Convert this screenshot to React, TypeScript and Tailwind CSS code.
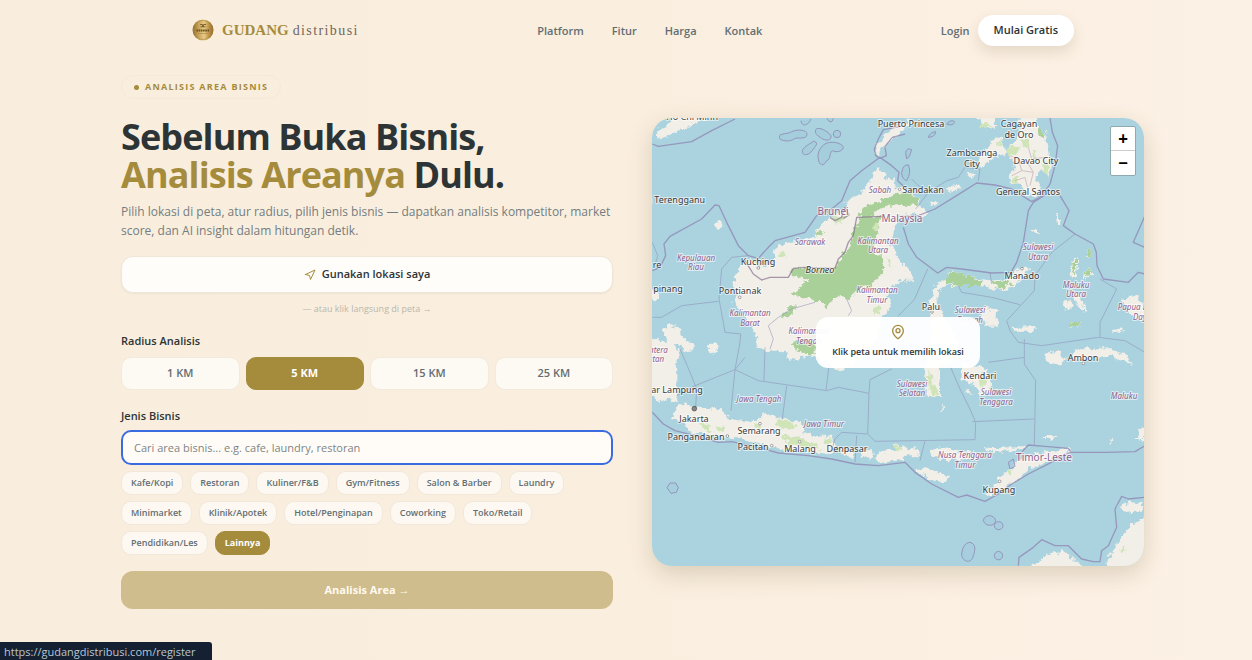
import { useState } from "react";
import { MapPin, Navigation } from "lucide-react";

const navLinks = ["Platform", "Fitur", "Harga", "Kontak"];
const radiusOptions = [1, 5, 15, 25];
const businessTypes = [
  "Kafe/Kopi",
  "Restoran",
  "Kuliner/F&B",
  "Gym/Fitness",
  "Salon & Barber",
  "Laundry",
  "Minimarket",
  "Klinik/Apotek",
  "Hotel/Penginapan",
  "Coworking",
  "Toko/Retail",
  "Pendidikan/Les",
  "Lainnya",
];

const land = [
  // Vietnam
  "36,92 42,62 60,55 72,38 78,15 215,15 190,32 140,40 130,60 100,66 75,78 45,90",
  // Borneo
  "705,178 722,195 722,215 745,205 748,232 775,235 800,255 828,272 822,290 850,310 840,325 790,312 760,335 742,370 745,390 732,410 750,420 762,455 790,480 812,515 765,515 745,530 730,560 742,590 715,620 690,700 650,745 620,775 580,785 540,760 500,742 430,752 418,725 360,725 335,715 335,690 325,650 300,625 280,600 268,580 275,560 263,530 275,490 290,470 300,450 320,450 340,470 375,472 395,450 385,435 395,410 450,400 500,390 510,370 545,335 565,320 600,300 600,285 625,262 650,250 660,225 680,215 690,185",
  // Palawan
  "690,130 705,95 730,70 765,50 790,30 800,35 775,65 740,90 715,115 700,140",
  // Mindanao
  "1085,115 1095,135 1110,180 1088,200 1095,222 1125,225 1150,262 1175,265 1190,235 1170,200 1190,180 1210,205 1217,170 1208,120 1200,70 1180,62 1175,20 1120,20 1125,75 1110,100",
  "1000,155 1020,120 1050,85 1072,88 1072,110 1090,130 1050,145 1010,178",
  "990,20 1050,20 1050,62 1030,60 1010,42",
  "965,195 985,190 993,202 975,208",
  "905,240 930,228 945,238 915,250",
  "850,285 875,272 880,282 855,292",
  // Sulawesi
  "860,620 852,580 865,540 880,520 905,508 908,490 930,488 990,505 1040,515 1090,508 1120,480 1145,468 1152,480 1125,512 1100,538 1050,542 1010,528 950,532 905,530 880,545 875,590 900,625 940,700 920,760 885,770 885,860 846,865 843,790 855,700",
  "950,760 1020,780 1042,820 1032,855 1010,862 995,840 975,818 950,815",
  "1015,598 1055,600 1052,620 1060,650 1020,650 1012,622",
  "1105,655 1150,652 1180,658 1160,668 1108,668",
  "965,842 978,840 976,858 966,855",
  "893,880 897,880 896,915 892,912",
  // Maluku
  "1295,445 1302,465 1294,500 1280,508 1275,482 1282,455",
  "1318,485 1340,476 1342,494 1320,508 1312,520",
  "1290,555 1300,550 1325,605 1318,610 1295,580",
  "1258,580 1282,582 1275,600 1258,598",
  "1325,425 1340,420 1336,442 1322,445",
  "1275,640 1310,645 1300,655 1275,652",
  "1195,735 1240,728 1266,750 1250,768 1215,762",
  "1280,740 1310,718 1390,718 1440,735 1460,765 1440,760 1390,740 1340,745 1290,752",
  "1430,570 1470,560 1500,590 1500,640 1470,630 1450,608",
  "1400,660 1435,655 1430,670 1405,672",
  "1185,990 1215,978 1240,980 1220,995",
  "1480,965 1500,950 1500,995 1475,990",
  "1390,992 1402,990 1400,1002",
  "1163,360 1172,358 1178,375 1168,376",
  "1236,315 1244,312 1246,345 1238,345",
  // Sumatra
  "10,690 60,700 75,685 105,730 93,770 97,880 62,868 42,880 10,850",
  "55,660 75,645 105,658 112,685 140,705 150,722 120,728 98,705 62,690",
  "190,705 210,700 222,722 205,735 188,725",
  "10,540 30,545 45,572 25,580",
  "210,342 225,335 232,350 218,362 208,352",
  // Java
  "100,885 180,895 240,905 252,930 330,940 360,912 400,925 440,935 475,940 475,965 500,980 560,980 566,1015 560,1035 450,1025 380,1015 300,990 200,980 130,965 125,940 80,930 95,900",
  // Nusa Tenggara
  "590,1025 628,1030 620,1046 595,1042",
  "645,1030 680,1020 684,1045 652,1045",
  "692,1040 730,1022 765,1030 772,1050 720,1060 692,1055",
  "745,1005 780,1015 820,1020 818,1040 765,1045",
  "855,1030 890,1015 950,1030 1015,1035 1000,1050 930,1052 870,1048",
  "1020,1015 1060,1018 1145,1008 1150,1018 1080,1028 1022,1030",
  "810,1080 850,1078 912,1105 905,1122 878,1120 815,1092",
  "1018,1160 1070,1100 1100,1075 1140,1040 1200,1030 1275,1018 1270,1035 1200,1060 1150,1080 1120,1110 1060,1148",
  // Australia
  "1150,1380 1180,1355 1210,1335 1250,1322 1300,1360 1320,1385",
  "1380,1380 1400,1330 1430,1280 1470,1240 1510,1225 1510,1390",
  "1418,1190 1470,1178 1500,1182 1490,1205 1440,1212",
];

const forest = [
  "640,325 710,320 692,380 682,430 710,440 715,490 680,530 640,540 612,570 580,560 560,575 545,600 530,575 510,580 500,570 440,560 470,530 490,510 440,500 440,480 480,475 570,480 600,430 625,380",
  "640,320 670,290 720,268 760,255 785,250 826,272 820,286 780,288 725,290 700,305 680,322",
  "905,495 930,488 985,505 1012,515 1005,530 950,532 905,525",
  "1040,520 1090,512 1105,525 1060,540",
  "405,620 430,598 455,590 435,620 410,628",
  "512,370 530,362 535,375 515,382",
  "440,700 480,690 512,700 512,735 480,735 450,720",
  "1318,485 1340,478 1335,495 1320,502",
  "1325,425 1340,420 1336,440 1324,442",
  "1282,460 1296,450 1296,480 1284,495",
  "1275,640 1308,645 1300,653 1277,650",
  "1180,50 1200,75 1195,90 1180,75",
];

const scrub = [
  "170,945 195,950 200,968 175,962",
  "215,955 235,950 240,968 222,970",
  "395,930 440,940 455,955 420,960 390,945",
  "330,945 350,950 345,960 328,956",
  "410,980 460,985 500,1000 530,1020 480,1015 420,1000",
  "745,1010 770,1015 768,1028 750,1026",
  "535,985 560,990 555,1010 538,1005",
  "850,780 860,800 868,830 880,850 862,860 850,830",
  "1000,800 1015,790 1022,820 1010,840",
  "690,340 705,350 700,370 688,360",
  "560,325 600,320 590,345 570,340",
  "400,430 420,425 425,440 405,445",
  "685,600 702,590 705,612 690,618",
  "725,445 735,450 738,475 728,470",
  "1085,115 1125,110 1115,135 1090,138",
  "1130,90 1155,95 1150,115 1130,112",
  "1195,160 1208,165 1205,200 1196,190",
  "1100,200 1120,205 1115,222 1100,220",
  "1160,120 1175,128 1172,150 1160,142",
  "1060,95 1070,98 1068,112 1060,108",
  "1005,45 1025,40 1040,55 1020,58",
  "1085,1085 1100,1080 1098,1098 1086,1100",
  "1420,1325 1440,1310 1445,1322 1425,1335",
];

const seaBorders = [
  "M22 105 L40 112 140 98 200 65 270 30",
  "M22 485 L45 475 62 440 57 405 75 382 170 330 210 288 222 290 250 350 280 410 310 440 340 448 370 415 390 395 480 370 515 320 560 300 590 275 615 215 650 185 705 145 740 170 762 190 758 215 785 240",
  "M780 50 L715 62 700 90 688 120 692 140 705 148 724 140 720 112 742 85 780 75",
  "M775 355 L790 405 815 445 878 492 905 475 950 480 1040 492 1098 490 1115 460 1135 400 1143 350 1150 305 1165 280 1205 255",
  "M1215 27 L1222 70 1238 110 1230 170 1215 225 1190 262 1160 278 1100 240 1050 228 995 222 935 260 870 300 820 320 760 322",
  "M1245 260 L1272 305 1255 350 1290 375 1345 405 1354 430 1356 470 1375 510 1450 520 1480 490 1500 495",
  "M1500 320 L1465 400 1500 415",
  "M22 910 L55 945 90 965 150 980 220 1000 260 998 340 1015 400 1032 490 1040 560 1050 630 1065 700 1070 780 1060 810 1090 860 1125 940 1165 965 1158 1020 1177 1060 1155 1100 1125 1150 1095 1200 1070 1275 1030 1380 1030 1470 1028 1500 1010",
  "M1130 1030 L1150 1008 1200 1012 1270 1018 1280 1030",
  "M1120 1370 L1122 1345 1165 1315 1190 1292 1230 1310 1270 1310 1310 1350 1345 1358 1365 1358 1370 1325 1390 1310 1415 1255 1410 1200 1430 1162 1450 1170 1500 1165",
];

const provinceLines = [
  "M310 440 L260 445 230 480 222 570 235 640 240 670 287 675 285 700 270 782 150 830 95 860",
  "M22 625 L50 625 110 590 220 577",
  "M22 400 L38 440 30 470",
  "M105 720 L135 790 155 840 152 895",
  "M270 782 L340 815 545 845 580 835 672 853 675 812 740 780",
  "M270 782 L258 905",
  "M360 715 L357 815",
  "M425 830 L412 930",
  "M553 760 L543 845",
  "M672 853 L668 975 690 997 990 992 992 940 975 900 945 840 915 770",
  "M560 1025 L570 990 590 970 665 975",
  "M635 980 L630 1060",
  "M840 995 L825 1055",
  "M982 938 L1168 930",
  "M1168 1008 L1172 815 1138 765 1138 715 1138 690",
  "M1030 760 L1138 745",
  "M1290 375 L1220 430 1170 500 1168 545 1085 635 1095 665 1120 700 1190 710 1360 685 1440 695 1500 730",
  "M1365 510 L1415 540 1365 640 1365 685",
  "M848 480 L808 572 760 620",
  "M940 530 L950 550 1040 565 1125 587",
  "M375 720 L385 690 370 650 400 625 440 600 510 580",
  "M605 570 L620 605 610 620",
  "M300 745 L270 782",
  "M1035 490 L1040 525",
  "M812 300 L850 250 905 215 940 205 960 175 1005 180 1000 215",
  "M800 210 L820 230 850 245",
];

const reefs = [
  "M405 90 C395 70 425 78 440 68 C460 60 485 62 486 75 C485 92 465 85 450 88 C440 98 415 98 405 90Z",
  "M512 62 C520 50 550 68 558 80 C560 98 540 95 530 88 C518 80 508 75 512 62Z",
  "M472 130 C470 115 495 105 505 97 C520 98 515 110 505 120 C495 138 475 142 472 130Z",
  "M520 150 C515 130 530 110 540 105 C555 95 590 100 595 115 C592 130 570 130 562 125 C550 135 560 150 545 155 C535 175 522 168 520 150Z",
  "M565 75 a10 10 0 1 0 22 0 a10 10 0 1 0 -22 0Z",
  "M468 35 C470 55 490 50 498 30",
  "M545 28 Q560 50 565 28",
  "M66 1136 L75 1122 92 1122 100 1136 94 1150 78 1153Z",
  "M1015 1235 C1018 1215 1048 1215 1052 1235 C1048 1255 1020 1252 1015 1235Z",
  "M1048 1250 a13 12 0 1 0 26 0 a13 12 0 1 0 -26 0Z",
  "M1048 1340 a12 12 0 1 0 25 0 a12 12 0 1 0 -25 0Z",
  "M950 1340 C950 1315 962 1300 975 1300 C995 1305 990 1325 985 1340 C980 1365 955 1360 950 1340Z",
  "M1090 1060 L1105 1050 1110 1072 1095 1080Z",
  "M782 130 Q785 115 800 122 Q795 145 785 150Z",
  "M770 190 Q775 165 790 168 Q800 190 785 215 Q770 210 770 190Z",
  "M850 85 Q855 70 872 68 Q870 85 850 85Z",
  "M905 45 Q920 28 930 40 Q920 52 905 45Z",
];

// [text, x, y]
const cities: [string, number, number][] = [
  ["Ho Chi Minh", 40, 2],
  ["Puerto Princesa", 259, 9],
  ["Cagayan", 367, 9],
  ["de Oro", 367, 20],
  ["Zamboanga", 320, 38],
  ["City", 320, 49],
  ["Davao City", 384, 46],
  ["Sandakan", 271, 75],
  ["General Santos", 376, 77],
  ["a Terengganu", 24, 85],
  ["Kuching", 106, 147],
  ["re", 5, 150],
  ["pinang", 16, 174],
  ["Pontianak", 88, 176],
  ["Manado", 370, 161],
  ["Palu", 279, 192],
  ["Ambon", 431, 243],
  ["Kendari", 328, 261],
  ["ar Lampung", 25, 275],
  ["Jakarta", 42, 304],
  ["Pangandaran", 44, 322],
  ["Semarang", 107, 316],
  ["Pacitan", 101, 332],
  ["Malang", 148, 334],
  ["Denpasar", 195, 334],
  ["Kupang", 347, 375],
];

const regions: [string, number, number][] = [
  ["Sabah", 228, 75],
  ["Sarawak", 158, 127],
  ["Kalimantan", 226, 126],
  ["Utara", 226, 135],
  ["Kepulauan", 44, 143],
  ["Riau", 44, 152],
  ["Kalimantan", 225, 175],
  ["Timur", 225, 185],
  ["Kalimantan", 98, 198],
  ["Barat", 98, 208],
  ["Kalimantan", 157, 216],
  ["Tengah", 157, 226],
  ["Sulawesi", 386, 132],
  ["Utara", 386, 142],
  ["Maluku", 424, 170],
  ["Utara", 424, 179],
  ["Sulawesi", 318, 195],
  ["Tengah", 318, 205],
  ["Papua Barat", 488, 192],
  ["Daya", 490, 202],
  ["Sulawesi", 260, 269],
  ["Selatan", 260, 278],
  ["Sulawesi", 344, 277],
  ["Tenggara", 344, 287],
  ["Maluku", 472, 281],
  ["Jawa Tengah", 107, 284],
  ["Jawa Timur", 172, 309],
  ["matera", 3, 235],
  ["latan", 3, 244],
  ["Nusa Tenggara", 313, 340],
  ["Timur", 313, 350],
];

const countries: [string, number, number][] = [
  ["Brunei", 181, 97],
  ["Malaysia", 250, 104],
  ["Timor-Leste", 392, 343],
];

function AreaMap() {
  return (
    <svg
      viewBox="0 0 492 448"
      preserveAspectRatio="xMidYMid slice"
      className="block h-full w-full"
      role="img"
      aria-label="Peta Indonesia"
    >
      <defs>
        <filter id="coast" x="-5%" y="-5%" width="110%" height="110%">
          <feTurbulence type="fractalNoise" baseFrequency="0.06" numOctaves="3" seed="4" />
          <feDisplacementMap in="SourceGraphic" scale="26" xChannelSelector="R" yChannelSelector="G" />
        </filter>
      </defs>
      <rect width="492" height="448" fill="#aad3df" />
      <g transform="translate(-7 -9) scale(0.33333)" strokeLinejoin="round">
        <g filter="url(#coast)">
          {land.map((points) => (
            <polygon key={points} points={points} fill="#f2efe9" />
          ))}
          {forest.map((points) => (
            <polygon key={points} points={points} fill="#a9d098" />
          ))}
          {scrub.map((points) => (
            <polygon key={points} points={points} fill="#cfe5b8" />
          ))}
        </g>
        <g fill="none" stroke="#8d7fae" strokeWidth="4" opacity="0.7">
          {seaBorders.map((d) => (
            <path key={d} d={d} />
          ))}
          <path
            d="M300 455 L325 495 350 513 375 505 430 505 445 478 480 475 570 478 580 450 600 430 610 400 625 380 635 325 710 322"
            stroke="#86708f"
          />
          <path d="M555 325 L570 335 590 325 600 295 612 318 595 328" stroke="#86708f" />
        </g>
        <g fill="none" stroke="#8d8fb5" strokeWidth="3" opacity="0.55">
          {provinceLines.map((d) => (
            <path key={d} d={d} />
          ))}
          <path
            d="M1095 140 L1120 150 1130 185 1100 200 M1130 185 L1165 190 1155 230 M1150 115 L1160 150 1200 145 M1120 150 L1150 165 1165 190 M1110 215 L1140 205 1150 245"
            stroke="#b59aa8"
          />
        </g>
        <g fill="#8fb6d8" fillOpacity="0.2" stroke="#8d7fae" strokeWidth="3" opacity="0.75">
          {reefs.map((d) => (
            <path key={d} d={d} />
          ))}
        </g>
        <g fill="#fff" stroke="#777" strokeWidth="2">
          <circle cx="340" cy="477" r="4" />
          <circle cx="284" cy="565" r="4" />
          <circle cx="764" cy="241" r="4" />
          <circle cx="1131" cy="479" r="4" />
          <circle cx="861" cy="609" r="4" />
          <circle cx="1315" cy="763" r="4" />
          <circle cx="1064" cy="1117" r="4" />
          <circle cx="464" cy="998" r="4" />
          <circle cx="345" cy="944" r="4" />
          <circle cx="247" cy="981" r="4" />
          <circle cx="380" cy="1010" r="4" />
          <circle cx="148" cy="899" r="7" fill="#888" stroke="#444" />
        </g>
      </g>
      <g
        textAnchor="middle"
        className="font-['Noto_Sans','Open_Sans',sans-serif]"
        stroke="#ffffff"
        strokeOpacity="0.6"
        strokeWidth="2"
        paintOrder="stroke"
        strokeLinejoin="round"
      >
        <g fill="#8d618b" fontSize="8" fontStyle="italic">
          {regions.map(([name, x, y]) => (
            <text key={`${name}-${x}-${y}`} x={x} y={y}>{name}</text>
          ))}
        </g>
        <g fill="#8d618b" fontSize="10">
          {countries.map(([name, x, y]) => (
            <text key={name} x={x} y={y}>{name}</text>
          ))}
        </g>
        <g fill="#3a3a3a" fontSize="9">
          {cities.map(([name, x, y]) => (
            <text key={name} x={x} y={y}>{name}</text>
          ))}
          <text x="168" y="155" fontStyle="italic">Borneo</text>
        </g>
      </g>
    </svg>
  );
}

function Coin() {
  return (
    <svg viewBox="0 0 22 22" className="h-[22px] w-[22px]" aria-hidden="true">
      <defs>
        <linearGradient id="coin" x1="0" y1="0" x2="1" y2="0">
          <stop offset="0" stopColor="#8f6b2c" />
          <stop offset="0.3" stopColor="#c9a55c" />
          <stop offset="0.55" stopColor="#e6cb88" />
          <stop offset="0.8" stopColor="#b98f45" />
          <stop offset="1" stopColor="#8a6628" />
        </linearGradient>
      </defs>
      <circle cx="11" cy="11" r="10.5" fill="url(#coin)" />
      <circle cx="11" cy="11" r="9.5" fill="none" stroke="#a9853f" strokeWidth="0.6" />
      <path d="M8 5.5 H10.5 V8 M14 5.5 H11.5 V8 M8.5 7.8 H13.5" fill="none" stroke="#7a5c26" strokeWidth="0.9" />
      <path d="M4.5 11.5 H17.5" stroke="#6b4f1e" strokeWidth="2" strokeDasharray="1.6 0.6" />
      <path d="M6 14.5 H16" stroke="#a9853f" strokeWidth="0.6" />
    </svg>
  );
}

export default function App() {
  const [radius, setRadius] = useState(5);
  const [business, setBusiness] = useState("Lainnya");
  const [query, setQuery] = useState("");

  return (
    <div className="min-h-screen bg-linear-to-r from-[#f9eedd] via-[#faeedf] to-[#fcf1e5] pl-[13px] font-['Open_Sans','Noto_Sans',sans-serif] text-[#2d3436]">
      {/* Navbar */}
      <header className="mx-auto flex h-[60px] max-w-[883px] items-center justify-between">
        <a href="#" className="flex items-center gap-2 pl-px font-['Liberation_Serif',serif]">
          <Coin />
          <span className="flex items-baseline gap-1">
            <span className="text-[15px] font-bold text-[#a58b3c]">GUDANG</span>
            <span className="text-[14px] tracking-widest text-[#6f6658]">distribusi</span>
          </span>
        </a>
        <nav className="flex gap-7 pt-[2px] text-[11px] font-semibold text-[#636e72]">
          {navLinks.map((link) => (
            <a key={link} href="#">{link}</a>
          ))}
        </nav>
        <div className="flex items-center gap-2 text-[11px] font-semibold">
          <a href="#" className="pt-[2px] text-[#636e72]">Login</a>
          <button className="h-[31px] rounded-full bg-white px-4 shadow-[0_6px_14px_rgba(90,75,30,0.14)]">
            Mulai Gratis
          </button>
        </div>
      </header>

      {/* Hero */}
      <main className="mx-auto grid max-w-[1023px] grid-cols-2 items-center gap-[39px] pt-[15px] pb-12">
        <section>
          <div className="flex h-6 w-fit items-center gap-[6px] rounded-full border border-[#f5ead9] px-3 text-[9px] font-bold tracking-[0.14em] text-[#a58b3c]">
            <span className="h-[5px] w-[5px] rounded-full bg-[#a58b3c]" />
            ANALISIS AREA BISNIS
          </div>
          <h1 className="mt-[19px] text-[36px] leading-[38px] font-bold tracking-tight">
            Sebelum Buka Bisnis,
            <br />
            <span className="text-[#a58b3c]">Analisis Areanya</span> Dulu.
          </h1>
          <p className="mt-2 text-[12px] leading-[19px] text-[#747d7f]">
            Pilih lokasi di peta, atur radius, pilih jenis bisnis — dapatkan analisis kompetitor, market
            score, dan AI insight dalam hitungan detik.
          </p>

          <button className="mt-4 flex h-[37px] w-full items-center justify-center gap-[6px] rounded-xl border border-[#efe6d8] bg-[#fffdf9] text-[11px] font-semibold shadow-xs">
            <Navigation className="h-3 w-3 text-[#a58b3c]" />
            Gunakan lokasi saya
          </button>
          <p className="mt-2 text-center text-[9px] leading-4 text-[#b9b8ad]">— atau klik langsung di peta →</p>

          <h2 className="mt-4 text-[11px] leading-4 font-semibold">Radius Analisis</h2>
          <div className="mt-2 grid grid-cols-4 gap-[6px]">
            {radiusOptions.map((km) => (
              <button
                key={km}
                onClick={() => setRadius(km)}
                aria-pressed={radius === km}
                className={`h-[33px] rounded-[10px] border text-[11px] ${
                  radius === km
                    ? "border-[#a58b3c] bg-[#a58b3c] font-bold text-white"
                    : "border-[#f3e9dc] bg-[#fdf9f3] font-semibold text-[#636e72]"
                }`}
              >
                {km} KM
              </button>
            ))}
          </div>

          <label htmlFor="business" className="mt-[18px] block text-[11px] leading-4 font-semibold">
            Jenis Bisnis
          </label>
          <input
            id="business"
            type="text"
            value={query}
            onChange={(e) => setQuery(e.target.value)}
            placeholder="Cari area bisnis... e.g. cafe, laundry, restoran"
            className="mt-[6px] block h-[35px] w-full rounded-[10px] border-2 border-[#3a6be0] bg-[#fffcf8] px-[11px] text-[11px] outline-none placeholder:text-[#808485]"
          />
          <div className="mt-[6px] flex flex-wrap gap-x-[7px] gap-y-[6px]">
            {businessTypes.map((type) => (
              <button
                key={type}
                onClick={() => setBusiness(type)}
                aria-pressed={business === type}
                className={`h-6 rounded-[10px] border px-[9px] text-[9px] ${
                  business === type
                    ? "border-[#a58b3c] bg-[#a58b3c] font-bold text-white"
                    : "border-[#f1e8da] bg-[#fdf9f2] font-semibold text-[#636e72]"
                }`}
              >
                {type}
              </button>
            ))}
          </div>

          <button className="mt-4 h-[38px] w-full rounded-xl bg-[#d0bd8d] text-[11px] font-bold text-[#fffaf0]">
            Analisis Area →
          </button>
        </section>

        {/* Map */}
        <section className="relative h-[448px] overflow-hidden rounded-[20px] shadow-[0_8px_24px_rgba(90,75,30,0.2)]">
          <AreaMap />
          <div className="absolute top-2 right-2 flex w-[26px] flex-col overflow-hidden rounded-xs border border-[#8fa9b0] bg-white text-[17px] font-bold text-black">
            <button aria-label="Zoom in" className="flex h-6 items-center justify-center border-b border-[#ccc]">
              <span>+</span>
            </button>
            <button aria-label="Zoom out" className="flex h-6 items-center justify-center">
              <span>−</span>
            </button>
          </div>
          <div className="pointer-events-none absolute inset-0 flex items-center justify-center">
            <div className="flex h-[51px] flex-col items-center justify-center gap-1 rounded-xl bg-white/95 px-4 text-[9px] leading-4 font-semibold">
              <MapPin className="h-4 w-4 text-[#a58b3c]" />
              Klik peta untuk memilih lokasi
            </div>
          </div>
        </section>
      </main>

      {/* Link preview */}
      <div className="fixed bottom-0 left-0 flex h-[18px] items-center rounded-tr-[3px] bg-[#152033] pt-[2px] pr-4 pl-1 text-[11px] text-[#b9c6cf]">
        https://gudangdistribusi.com/register
      </div>
    </div>
  );
}
